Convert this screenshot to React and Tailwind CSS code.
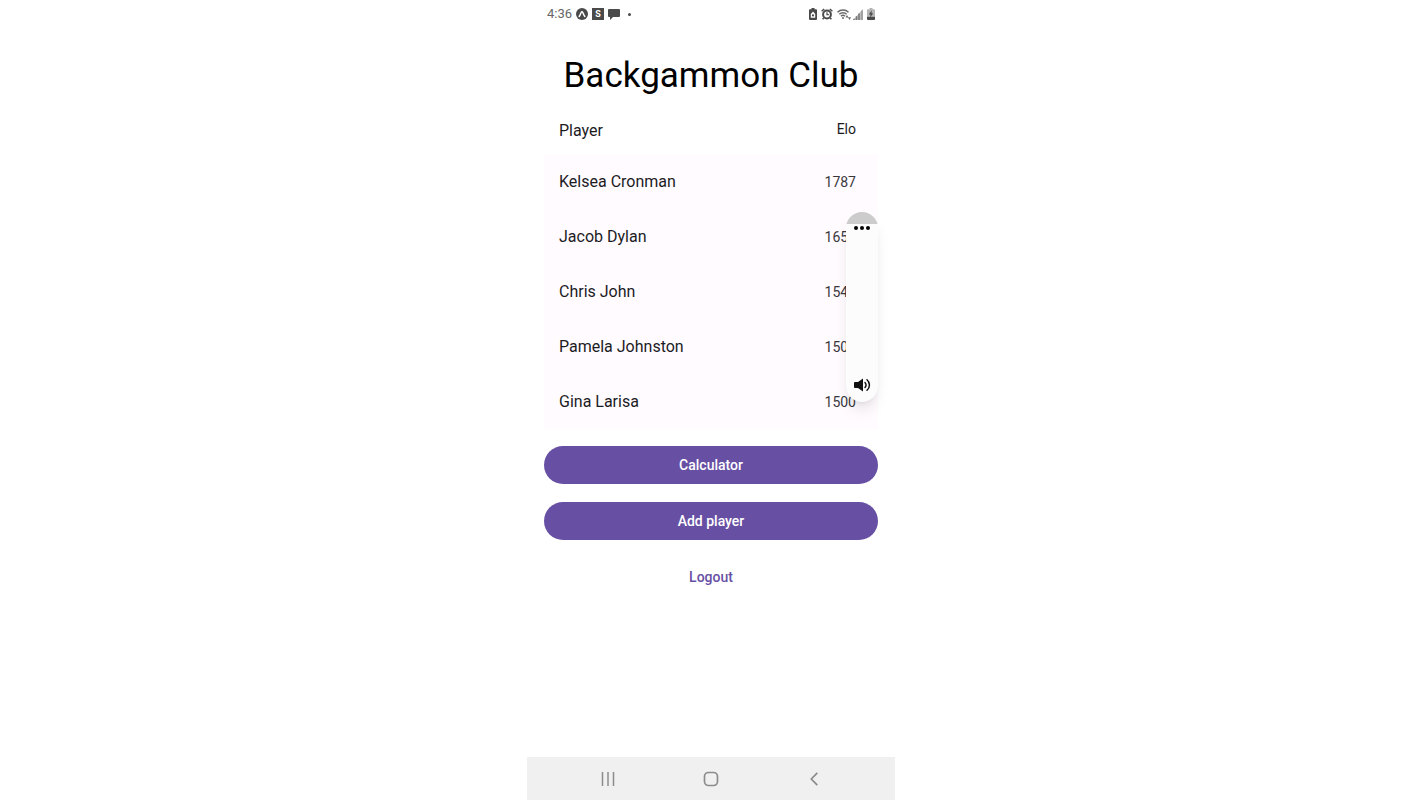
import React, { useState } from 'react'

const players = [
  { name: 'Kelsea Cronman', elo: 1787 },
  { name: 'Jacob Dylan', elo: 1650 },
  { name: 'Chris John', elo: 1540 },
  { name: 'Pamela Johnston', elo: 1500 },
  { name: 'Gina Larisa', elo: 1500 }
]

const StatusBar = () => {
  return (
    <header className="flex h-7 items-center justify-between px-5 text-[#4a4a4a]">
      <div className="flex items-center gap-1">
        <span className="text-[13px] leading-5 text-[#666666]">4:36</span>
        <svg width="12" height="12" viewBox="0 0 12 12" aria-hidden="true">
          <circle cx="6" cy="6" r="6" fill="currentColor" />
          <path d="M3.2 8.4C4.6 7 5 3.4 6 3.4S7.4 7 8.8 8.4" fill="none" stroke="#fff" strokeWidth="1.5" strokeLinecap="round" />
        </svg>
        <span className="flex h-3 w-3 items-center justify-center bg-[#4a4a4a] text-[9px] font-bold leading-3 text-white">S</span>
        <svg width="12" height="12" viewBox="0 0 12 12" aria-hidden="true">
          <path d="M1 1h10a1 1 0 0 1 1 1v6a1 1 0 0 1-1 1H5l-3 3V9H1a1 1 0 0 1-1-1V2a1 1 0 0 1 1-1z" fill="currentColor" />
        </svg>
        <span className="ml-1 h-[3px] w-[3px] rounded-full bg-[#4a4a4a]" />
      </div>
      <div className="flex items-center gap-1">
        {/* battery saver */}
        <svg width="8" height="12" viewBox="0 0 8 12" aria-hidden="true">
          <path d="M2.5 0h3v1.2H7A1 1 0 0 1 8 2.2V11a1 1 0 0 1-1 1H1a1 1 0 0 1-1-1V2.2a1 1 0 0 1 1-1h1.500z" fill="currentColor" />
          <path d="M4 3.600 6.200 6v3.700H1.800V6z" fill="#fff" />
          <circle cx="4" cy="7.400" r="1.100" fill="currentColor" />
        </svg>
        {/* alarm */}
        <svg width="12" height="12" viewBox="0 0 12 12" aria-hidden="true">
          <circle cx="6" cy="6.500" r="3.900" fill="none" stroke="currentColor" strokeWidth="2" />
          <path d="M.6 3.200 3.200 1M11.400 3.200 8.800 1M2.800 10 1.600 11.300M9.200 10l1.200 1.300" stroke="currentColor" strokeWidth="1.500" />
          <path d="M6 4.200v2.500h1.800" fill="none" stroke="currentColor" strokeWidth="1.200" />
        </svg>
        {/* wifi */}
        <svg width="14" height="12" viewBox="0 0 14 12" className="text-[#666666]" aria-hidden="true">
          <path d="M.5 4.200a8 8 0 0 1 11 0M2.300 6.300a5.300 5.300 0 0 1 7.400 0M4 8.200a3 3 0 0 1 4 0" fill="none" stroke="currentColor" strokeWidth="1.500" />
          <circle cx="6" cy="10" r="1" fill="currentColor" />
          <path d="M8.500 9.600 10 7l1.500 2.600zM11 9.200h3L12.500 12z" fill="currentColor" />
        </svg>
        {/* signal */}
        <svg width="10" height="11" viewBox="0 0 10 11" className="-ml-0.5" aria-hidden="true">
          <path d="M10 0v11H0z" fill="#bdbdbd" />
          <path d="M1 9.800V11M3.500 7.200V11M6 4.500V11" stroke="#777777" strokeWidth="1.500" />
          <path d="M9 1.500V11" stroke="#999999" strokeWidth="1.500" />
        </svg>
        {/* charging battery */}
        <svg width="8" height="12" viewBox="0 0 8 12" aria-hidden="true">
          <path d="M2.500 0h3v1.200H7a1 1 0 0 1 1 1V8H0V2.200a1 1 0 0 1 1-1h1.500z" fill="#b5b5b5" />
          <path d="M0 8.500h8V11a1 1 0 0 1-1 1H1a1 1 0 0 1-1-1z" fill="currentColor" />
          <path d="M4.800 2.200 1.800 6.500h1.700L3 9.800l3.200-4.500H4.500z" fill="currentColor" />
        </svg>
      </div>
    </header>
  )
}

const PlayerTable = () => {
  return (
    <table className="w-full">
      <thead>
        <tr className="h-[47px]">
          <th scope="col" className="px-[15px] text-left text-base font-normal">Player</th>
          <th scope="col" className="px-[22px] pb-1 text-right text-sm font-normal">Elo</th>
        </tr>
      </thead>
      <tbody className="bg-[#fffbff]">
        {players.map((player) => (
          <tr key={player.name} className="h-[55px]">
            <td className="px-[15px] text-base">{player.name}</td>
            <td className="px-[22px] text-right text-sm text-[#3a383d]">{player.elo}</td>
          </tr>
        ))}
      </tbody>
    </table>
  )
}

// System volume panel, floats over the list
const VolumePanel = () => {
  const [volume, setVolume] = useState(0)

  return (
    <div className="absolute right-0 top-[105px] flex h-[190px] w-8 flex-col items-center overflow-hidden rounded-full bg-[#fcfcfc] shadow-lg shadow-black/10">
      <div className="h-3 w-full shrink-0 bg-[#cccccc]" />
      <button type="button" aria-label="More volume options" className="flex h-2 w-full shrink-0 items-center justify-center gap-0.5">
        <span className="h-1 w-1 rounded-full bg-black" />
        <span className="h-1 w-1 rounded-full bg-black" />
        <span className="h-1 w-1 rounded-full bg-black" />
      </button>
      <input
        type="range"
        min="0"
        max="100"
        value={volume}
        onChange={(e) => setVolume(Number(e.target.value))}
        aria-label="Volume"
        className="w-full flex-1 opacity-0 [direction:rtl] [writing-mode:vertical-lr]"
      />
      <button type="button" aria-label="Mute" className="mb-2 flex h-[18px] w-full shrink-0 items-center justify-center text-[#111111]">
        <svg width="18" height="14" viewBox="0 0 18 14" aria-hidden="true">
          <path d="M2 4h3L10 .5v13L5 10H2a1 1 0 0 1-1-1V5a1 1 0 0 1 1-1z" fill="currentColor" />
          <path d="M12 4.500a3.500 3.500 0 0 1 0 5M14 1.700a7 7 0 0 1 0 10.600" fill="none" stroke="currentColor" strokeWidth="1.500" strokeLinecap="round" />
        </svg>
      </button>
    </div>
  )
}

const NavigationBar = () => {
  return (
    <nav className="flex h-[43px] items-center justify-between bg-[#f0f0f0] px-[69px] text-[#8c8c8c]">
      <button type="button" aria-label="Recent apps" className="flex w-6 justify-center">
        <svg width="14" height="14" viewBox="0 0 14 14" aria-hidden="true">
          <path d="M1.500 0v14M7 0v14M12.500 0v14" stroke="currentColor" strokeWidth="1.500" />
        </svg>
      </button>
      <button type="button" aria-label="Home" className="flex w-6 justify-center">
        <svg width="16" height="16" viewBox="0 0 16 16" aria-hidden="true">
          <rect x="1.500" y="1.500" width="13" height="13" rx="4" fill="none" stroke="currentColor" strokeWidth="1.700" />
        </svg>
      </button>
      <button type="button" aria-label="Back" className="flex w-6 justify-center">
        <svg width="8" height="14" viewBox="0 0 8 14" aria-hidden="true">
          <path d="M7.300.8 1.300 7l6 6.200" fill="none" stroke="currentColor" strokeWidth="1.700" />
        </svg>
      </button>
    </nav>
  )
}

const App = () => {
  return (
    <div className="min-h-screen bg-white font-['Roboto',sans-serif] text-[#1c1b1f]">
      <div className="mx-auto flex min-h-screen max-w-[368px] flex-col">
        <StatusBar />
        <main className="flex-1 px-[17px]">
          <h1 className="pb-[7px] pt-6 text-center text-[35px] leading-12 text-black">Backgammon Club</h1>
          <div className="relative">
            <PlayerTable />
            <VolumePanel />
          </div>
          <div className="mt-[17px] flex flex-col gap-[18px]">
            <button type="button" className="h-[38px] rounded-full bg-[#6750a4] text-sm font-medium text-white">
              Calculator
            </button>
            <button type="button" className="h-[38px] rounded-full bg-[#6750a4] text-sm font-medium text-white">
              Add player
            </button>
            <button type="button" className="h-[38px] rounded-full text-sm font-medium text-[#6750a4]">
              Logout
            </button>
          </div>
        </main>
        <NavigationBar />
      </div>
    </div>
  )
}

export default App
